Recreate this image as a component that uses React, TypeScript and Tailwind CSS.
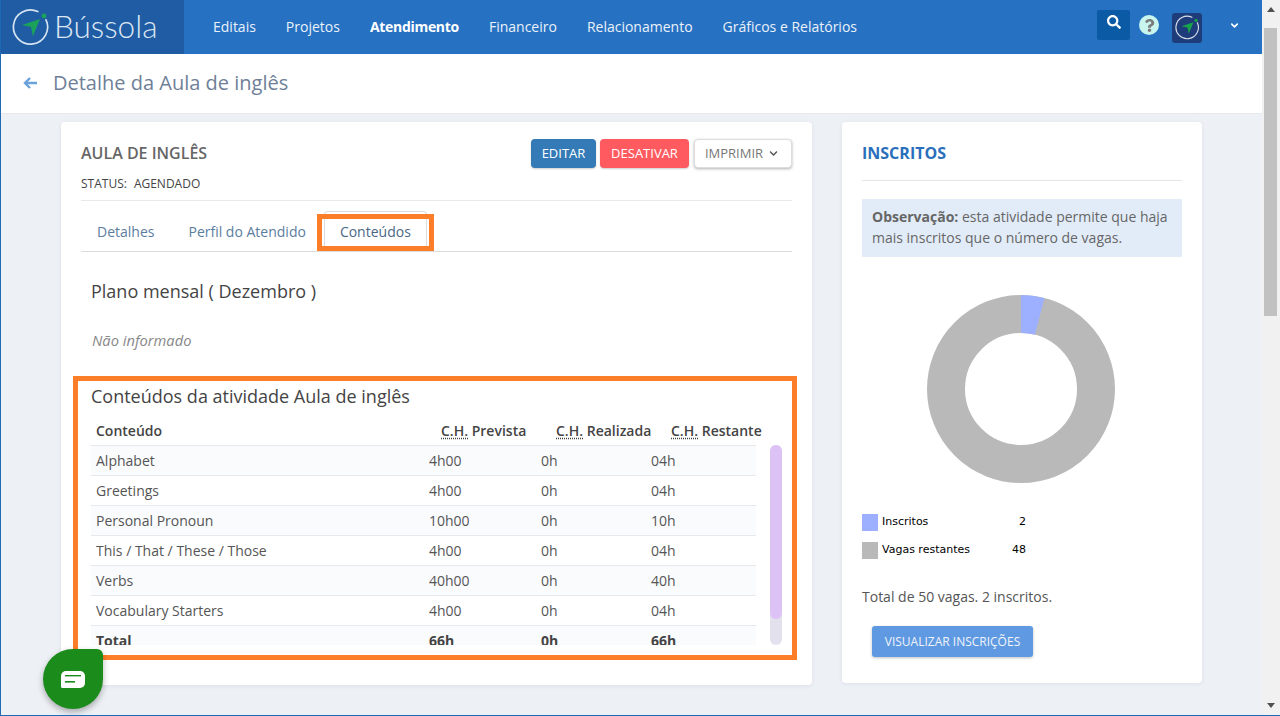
import { ChevronDown } from 'lucide-react';
import { FaChevronDown, FaQuestion, FaSearch } from 'react-icons/fa';

const NAV = ['Editais', 'Projetos', 'Atendimento', 'Financeiro', 'Relacionamento', 'Gráficos e Relatórios'];

const ROWS = [
  ['Alphabet', '4h00', '0h', '04h'],
  ['Greetings', '4h00', '0h', '04h'],
  ['Personal Pronoun', '10h00', '0h', '10h'],
  ['This / That / These / Those', '4h00', '0h', '04h'],
  ['Verbs', '40h00', '0h', '40h'],
  ['Vocabulary Starters', '4h00', '0h', '04h'],
];

const CompassMark = ({ size, ring, arrow }: { size: number; ring: string; arrow: string }) => (
  <svg width={size} height={size} viewBox="0 0 40 40" fill="none">
    <path d="M27.1 3.7 A18 18 0 1 0 35.8 12.4" stroke={ring} strokeWidth="1.8" strokeLinecap="round" />
    <circle cx="33.7" cy="8.5" r="2.6" fill={arrow} />
    <path d="M10.5 18 L29.5 11.5 L22 30 L20 20 Z" fill={arrow} />
  </svg>
);

const CH = ({ label }: { label: string }) => (
  <span>
    <span className="underline decoration-dotted underline-offset-2">C.H.</span> {label}
  </span>
);

const Donut = () => (
  <svg width="190" height="190" viewBox="0 0 190 190">
    <circle cx="95" cy="95" r="75" fill="none" stroke="#b8b9b8" strokeWidth="38" />
    <path d="M95 1 A94 94 0 0 1 118.4 4 L108.9 40.7 A56 56 0 0 0 95 39 Z" fill="#9cb0ff" />
  </svg>
);

export default function App() {
  return (
    <div className="relative flex h-[716px] w-[1280px] overflow-hidden border-b border-l border-[#1f6ab5] bg-[#edf0f5] font-['Open_Sans',sans-serif]">
      <div className="flex min-w-0 flex-1 flex-col">
        {/* Top bar */}
        <header className="flex h-[54px] shrink-0 items-center bg-[#2771c2]">
          <div className="flex h-full w-[183px] items-center gap-[4px] bg-[#1f5ca3] pl-[11px]">
            <CompassMark size={38} ring="#d5e3f1" arrow="#1aa15a" />
            <span className="font-['Lato',sans-serif] text-[31.5px] font-light leading-none text-[#dce7f3]">Bússola</span>
          </div>
          <nav className="ml-[29px] flex items-center gap-[30px] text-sm text-[#eaf1f9]">
            {NAV.map((item) => (
              <span key={item} className={item === 'Atendimento' ? 'font-bold tracking-[-0.3px] text-white' : ''}>
                {item}
              </span>
            ))}
          </nav>
          <div className="ml-auto flex items-center">
            <div className="mb-[4px] flex h-[30px] w-[33px] justify-center rounded-[2px] bg-[#0b5aa6] pt-[5px]">
              <FaSearch size={14} color="#fff" />
            </div>
            <div className="mb-[4px] ml-[9px] flex h-5 w-5 items-center justify-center rounded-full bg-[#c9f5ef]">
              <FaQuestion size={13} color="#7b7b7b" />
            </div>
            <div className="mb-[-1px] ml-[13px] flex h-[30px] w-[30px] items-center justify-center rounded-[3px] bg-[#1f3c7a]">
              <CompassMark size={25} ring="#d8dfea" arrow="#16a34a" />
            </div>
            <ChevronDown size={11} color="#fff" strokeWidth={3.5} className="mb-[4px] ml-[27px] mr-[22px]" />
          </div>
        </header>

        {/* Page title */}
        <div className="flex h-[60px] shrink-0 items-center border-b border-[#e6e8ec] bg-white pb-[2px] pl-[22px]">
          <svg width="15" height="14" viewBox="0 0 15 14" fill="none" stroke="#6aa2dc" strokeWidth="2.4">
            <path d="M14 7H2M7 2L2 7l5 5" />
          </svg>
          <h1 className="ml-[15px] text-xl font-normal text-[#6f7f98]">Detalhe da Aula de inglês</h1>
        </div>

        {/* Content */}
        <main className="flex min-h-0 flex-1 items-start gap-[30px] pl-[60px] pt-[8px]">
          <section className="h-[563px] w-[751px] rounded-[4px] bg-white px-5 pt-[20px] shadow-[0_1px_4px_rgba(40,60,100,0.08)]">
            <div className="flex h-[59px] items-start justify-between border-b border-[#e9e9e9]">
              <div>
                <h2 className="text-base font-semibold leading-[22px] text-[#666]">AULA DE INGLÊS</h2>
                <p className="mt-[12px] text-xs leading-[16px] text-[#444]">
                  STATUS:<span className="ml-[7px]">AGENDADO</span>
                </p>
              </div>
              <div className="mt-[-3px] flex items-center text-[13px]">
                <button className="h-[29px] w-[65px] rounded-[4px] bg-[#337ab7] text-white shadow-[0_1px_2px_rgba(0,0,0,0.2)]">EDITAR</button>
                <button className="ml-[4px] h-[29px] w-[89px] rounded-[4px] bg-[#ff5a5f] text-white shadow-[0_1px_2px_rgba(0,0,0,0.2)]">DESATIVAR</button>
                <button className="ml-[5px] flex h-[29px] w-[98px] items-center justify-center gap-[6px] rounded-[4px] border border-[#ddd] bg-white pr-[3px] text-[#777] shadow-[0_1px_3px_rgba(0,0,0,0.3)]">
                  IMPRIMIR
                  <FaChevronDown size={9} color="#555" />
                </button>
              </div>
            </div>

            <div className="mt-[10px] flex h-[41px] border-b border-[#dcdcdc] pl-[16px] text-sm text-[#5b7da0]">
              <span className="flex items-center pt-[1px]">Detalhes</span>
              <span className="ml-[34px] flex items-center pt-[1px]">Perfil do Atendido</span>
              <span className="ml-[18px] flex items-center rounded-t-[4px] border-x border-t border-[#ddd] bg-white px-[15px] text-[#4a6785]">Conteúdos</span>
            </div>

            <div className="px-[10px]">
              <h3 className="mt-[25px] text-lg font-normal leading-[28px] text-[#444]">Plano mensal ( Dezembro )</h3>
              <p className="ml-[1px] mt-[25px] text-[14.7px] italic leading-[20px] text-[#888]">Não informado</p>
              <h3 className="mt-[32px] text-lg font-normal leading-[28px] text-[#444]">Conteúdos da atividade Aula de inglês</h3>

              <div className="mb-[1px] mt-[6px] flex h-[28px] items-center text-[14px] font-semibold text-[#444]">
                <span className="ml-[5px] w-[345px]">Conteúdo</span>
                <span className="w-[115px]"><CH label="Prevista" /></span>
                <span className="w-[115px]"><CH label="Realizada" /></span>
                <span><CH label="Restante" /></span>
              </div>

              <div className="flex h-[200px] overflow-hidden">
                <div className="w-[665px] text-sm text-[#555]">
                  {ROWS.map((row, i) => (
                    <div key={row[0]} className={`flex h-[30px] items-center border-t border-[#e6e8ee] pl-[5px] ${i % 2 === 0 ? 'bg-[#fafbfd]' : 'bg-white'}`}>
                      <span className="w-[333px]">{row[0]}</span>
                      <span className="w-[112px]">{row[1]}</span>
                      <span className="w-[110px]">{row[2]}</span>
                      <span>{row[3]}</span>
                    </div>
                  ))}
                  <div className="flex h-[30px] items-center border-t border-[#e6e8ee] bg-[#fafbfd] pl-[5px] font-bold text-[#444]">
                    <span className="w-[333px]">Total</span>
                    <span className="w-[112px]">66h</span>
                    <span className="w-[110px]">0h</span>
                    <span>66h</span>
                  </div>
                </div>
                <div className="ml-[14px] h-[200px] w-3 rounded-md bg-[#e3e1ee]">
                  <div className="h-[174px] rounded-md bg-[#dcc2f5]" />
                </div>
              </div>
            </div>
          </section>

          <aside className="h-[561px] w-[360px] rounded-[4px] bg-white px-5 shadow-[0_1px_4px_rgba(40,60,100,0.08)]">
            <h2 className="flex h-[59px] items-center border-b border-[#e6e6e6] pt-[3px] text-base font-bold text-[#2a6fbb]">INSCRITOS</h2>
            <div className="mt-[18px] h-[58px] bg-[#e2ecf8] px-[10px] py-[7px] text-sm leading-[21px] text-[#666]">
              <b className="font-bold">Observação:</b> esta atividade permite que haja mais inscritos que o número de vagas.
            </div>
            <div className="ml-[64px] mt-[37px]">
              <Donut />
            </div>
            <div className="mt-[30px] font-['DejaVu_Sans',sans-serif] text-[11px] text-black">
              <div className="flex h-[17px] items-center">
                <span className="h-[17px] w-4 bg-[#9cb0ff]" />
                <span className="ml-1 w-[137px]">Inscritos</span>
                <span className="w-[7px]">2</span>
              </div>
              <div className="mt-[11px] flex h-[17px] items-center">
                <span className="h-[17px] w-4 bg-[#b8b9b8]" />
                <span className="ml-1 w-[130px]">Vagas restantes</span>
                <span>48</span>
              </div>
            </div>
            <p className="mt-[28px] text-sm leading-[20px] text-[#555]">Total de 50 vagas. 2 inscritos.</p>
            <button className="ml-[10px] mt-[19px] h-[31px] w-[161px] rounded-[3px] bg-[#5f99e1] text-xs text-[#f0f5fc] shadow-[0_1px_3px_rgba(0,0,0,0.25)]">VISUALIZAR INSCRIÇÕES</button>
          </aside>
        </main>
      </div>

      {/* Browser scrollbar */}
      <div className="flex h-full w-[18px] shrink-0 flex-col bg-[#f1f1f1] pl-[2px]">
        <svg className="ml-[3px] mt-[7px]" width="8" height="5" viewBox="0 0 8 5"><path d="M4 0l4 5H0z" fill="#505050" /></svg>
        <div className="mt-[16px] h-[288px] w-[13px] bg-[#c1c1c1]" />
        <svg className="mb-[7px] ml-[3px] mt-auto" width="8" height="5" viewBox="0 0 8 5"><path d="M4 5L8 0H0z" fill="#505050" /></svg>
      </div>

      {/* Annotation boxes */}
      <div className="absolute left-[316px] top-[214px] h-[37px] w-[117px] border-[5px] border-[#fd7e28]" />
      <div className="absolute left-[72px] top-[376px] h-[284px] w-[724px] border-[5px] border-[#fd7e28]" />

      {/* Chat button */}
      <div className="absolute left-[42px] top-[649px] flex h-[60px] w-[60px] items-center justify-center rounded-[30px] rounded-tr-[6px] bg-[#1b8c1b] shadow-[0_3px_6px_rgba(0,0,0,0.3)]">
        <svg width="24" height="17" viewBox="0 0 24 17">
          <path d="M5 0h14a5 5 0 0 1 5 5v7a5 5 0 0 1-5 5H1.5A1.5 1.5 0 0 1 0 15.5V5a5 5 0 0 1 5-5z" fill="#fff" />
          <rect x="4" y="4" width="16" height="1.4" fill="#1b8c1b" />
          <rect x="4" y="10" width="10" height="1.6" fill="#1b8c1b" />
        </svg>
      </div>
    </div>
  );
}
